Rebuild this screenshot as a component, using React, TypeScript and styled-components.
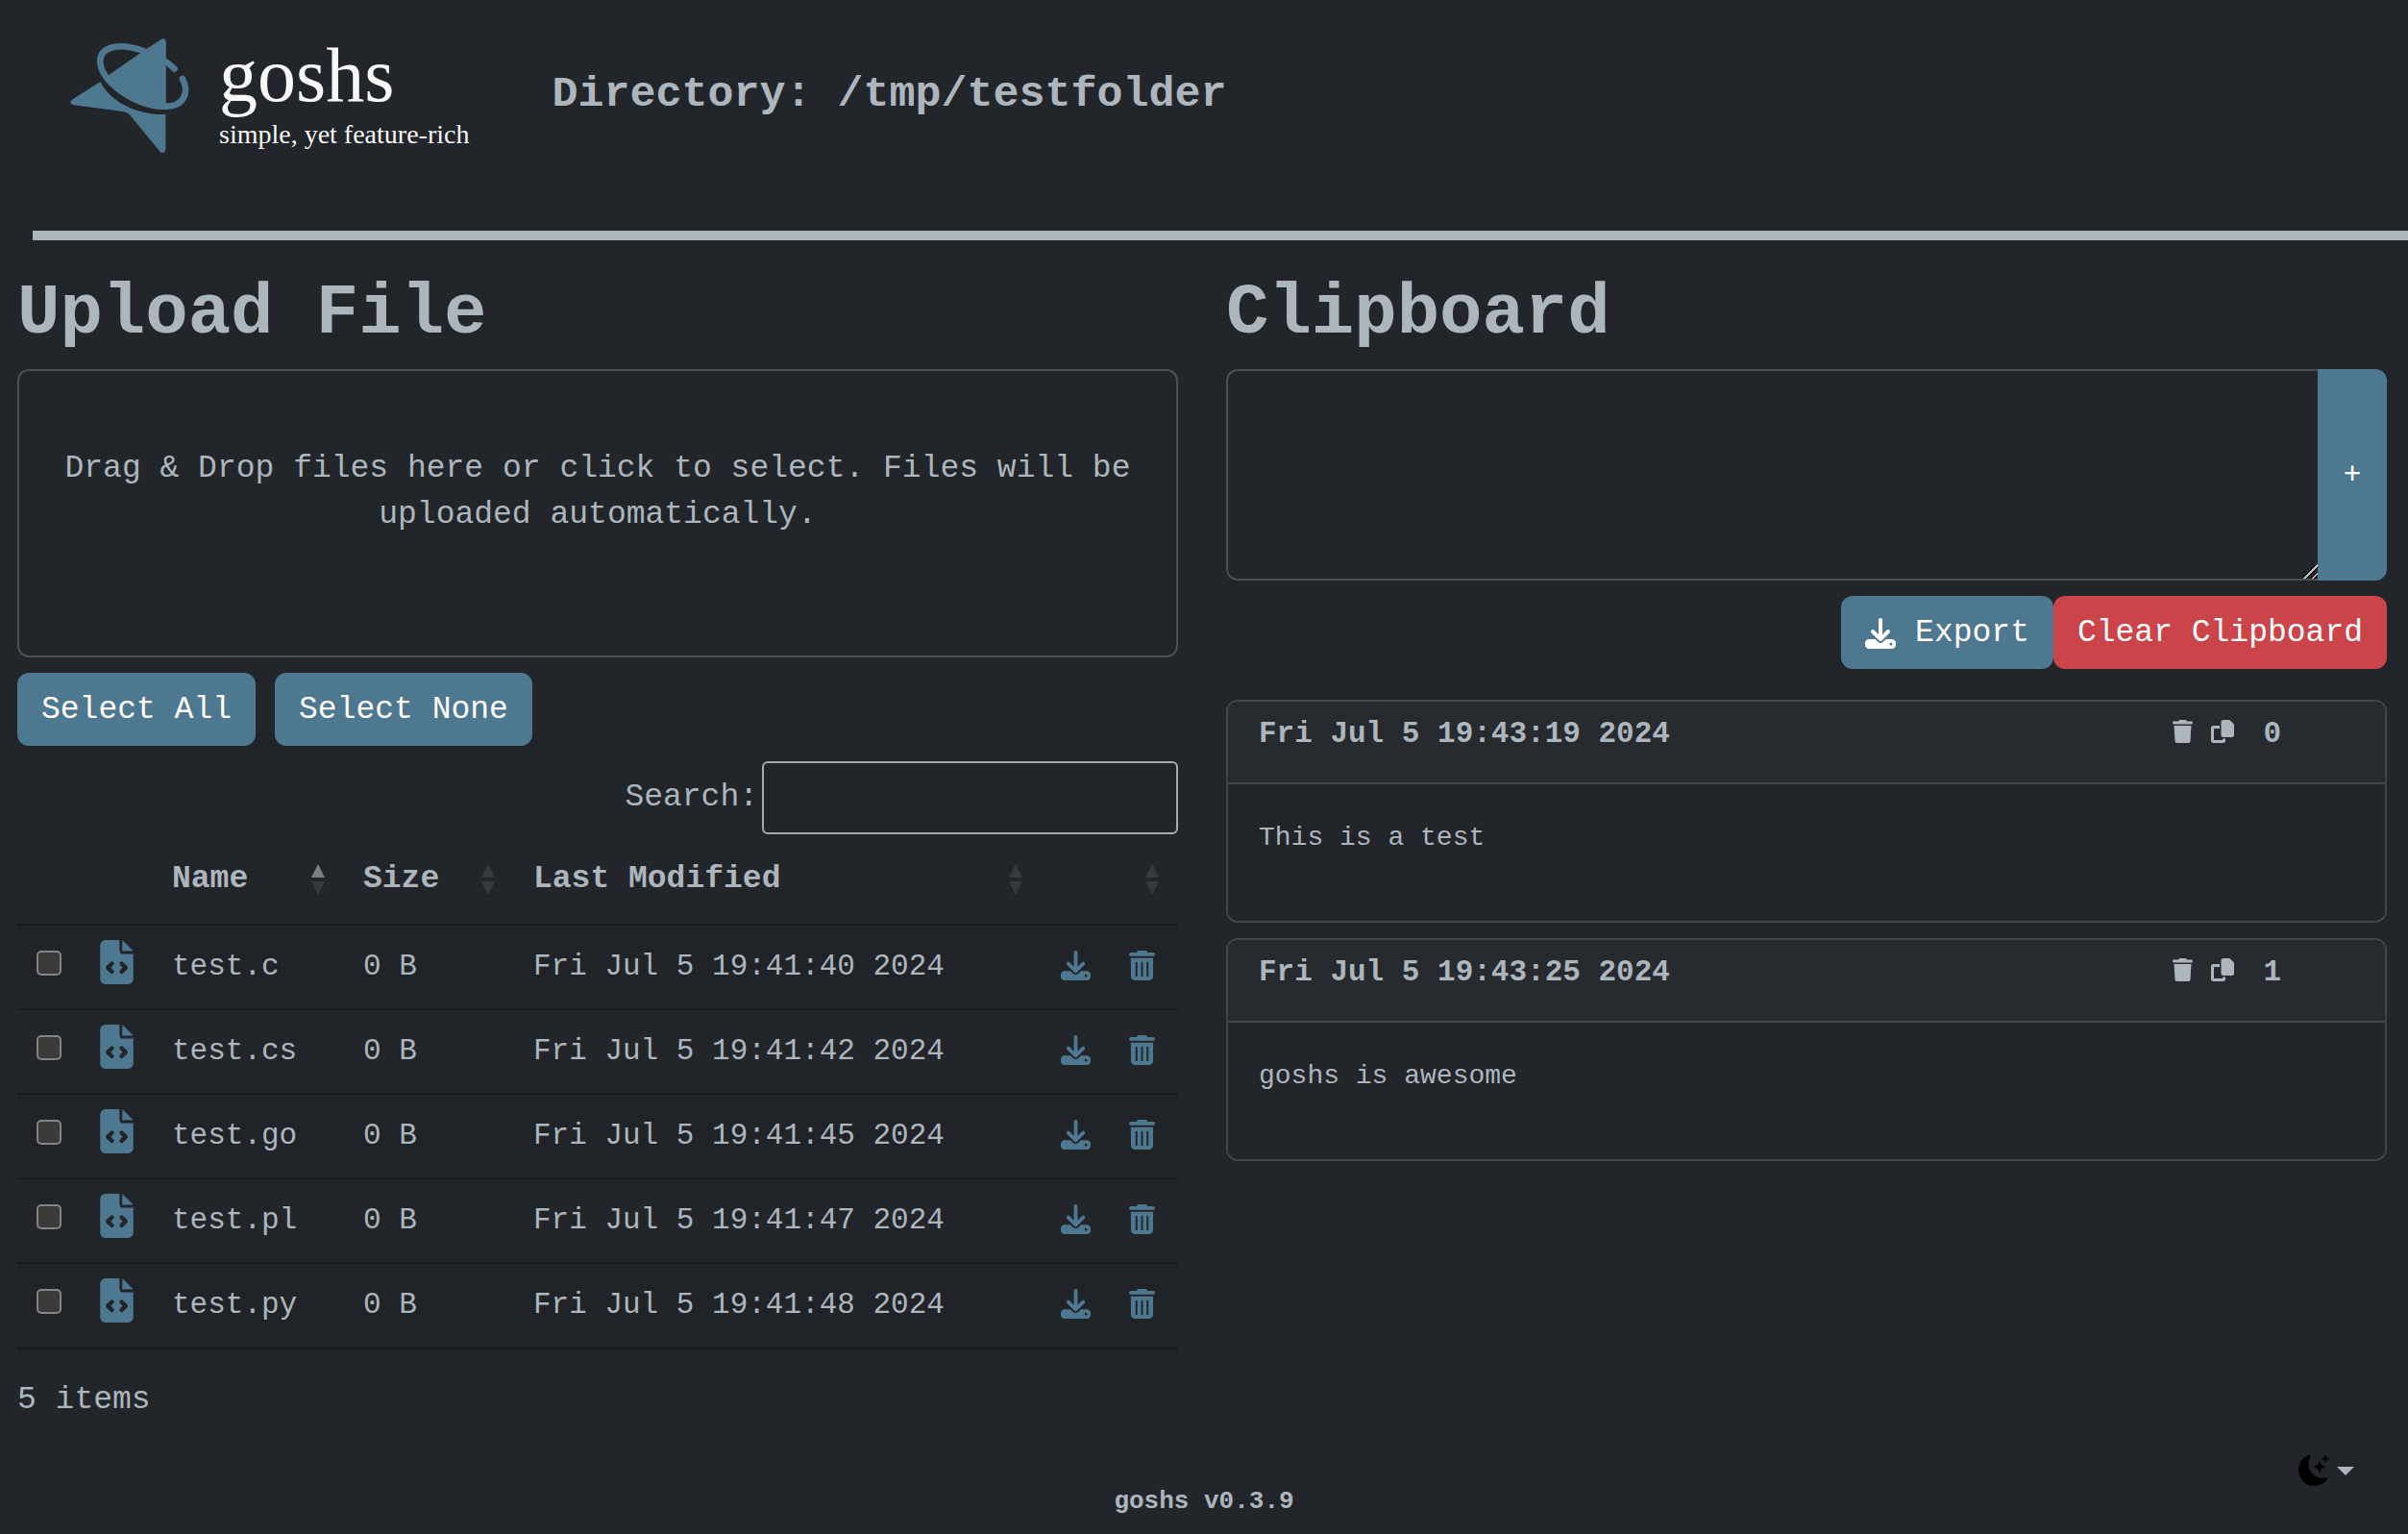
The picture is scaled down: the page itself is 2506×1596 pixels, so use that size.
import React, { useState } from "react";
import styled, { createGlobalStyle } from "styled-components";
import { FaDownload, FaFileCode, FaTrash, FaTrashCan } from "react-icons/fa6";
import { BsMoonStarsFill } from "react-icons/bs";

const color = {
  page: "#222529",
  stripe: "#202327",
  text: "#adb5bd",
  accent: "#4e7790",
  danger: "#cb444a",
  field: "#495057",
  cardLine: "#434649",
  cardHead: "#272a2f",
  rowLine: "#1a1c20",
};

const mono = '"Liberation Mono", "DejaVu Sans Mono", monospace';

const GlobalStyle = createGlobalStyle`
  *, *::before, *::after { box-sizing: border-box; }
  body {
    margin: 0;
    background: ${color.page};
    color: ${color.text};
    font-family: ${mono};
    font-size: 33px;
    line-height: 48px;
  }
  button, input, textarea { font-family: inherit; }
`;

const Header = styled.header`
  display: flex;
  align-items: flex-start;
  gap: 86px;
  min-height: 240px;
  padding: 36px 24px 0 72px;
`;

const Brand = styled.a`
  display: flex;
  align-items: flex-start;
  gap: 28px;
  color: #f8f8f8;
  text-decoration: none;
  font-family: "Liberation Serif", serif;
`;

const BrandName = styled.span`
  display: block;
  font-size: 80px;
  line-height: 84px;
`;

const BrandTagline = styled.span`
  display: block;
  margin-top: 4px;
  font-size: 28px;
  line-height: 32px;
  white-space: nowrap;
`;

const Directory = styled.h2`
  margin: 36px 0 0;
  font-size: 45px;
  line-height: 54px;
`;

const Rule = styled.hr`
  height: 10px;
  margin: 0 0 0 34px;
  border: 0;
  background: ${color.text};
`;

const Columns = styled.main`
  display: grid;
  grid-template-columns: minmax(0, 1fr) minmax(0, 1fr);
  gap: 50px;
  padding: 32px 22px 0 18px;
`;

const Title = styled.h1`
  margin: 0 0 14px;
  font-size: 74px;
  line-height: 88px;
`;

const DropZone = styled.label`
  display: block;
  min-height: 300px;
  padding: 78px 32px;
  border: 2px solid ${color.field};
  border-radius: 12px;
  text-align: center;
  cursor: pointer;

  input { display: none; }
`;

const ButtonRow = styled.div<{ $end?: boolean }>`
  display: flex;
  justify-content: ${(p) => (p.$end ? "flex-end" : "flex-start")};
  gap: ${(p) => (p.$end ? 0 : 20)}px;
  margin-top: 16px;
`;

const Button = styled.button<{ $danger?: boolean }>`
  display: flex;
  align-items: center;
  gap: 20px;
  height: 76px;
  padding: 2px 25px 0;
  border: 0;
  border-radius: 12px;
  background: ${(p) => (p.$danger ? color.danger : color.accent)};
  color: #fff;
  font-size: 33px;
  line-height: 48px;
  cursor: pointer;
`;

const SearchRow = styled.label`
  display: flex;
  align-items: center;
  justify-content: flex-end;
  gap: 4px;
  margin-top: 16px;
`;

const SearchInput = styled.input`
  width: 433px;
  height: 76px;
  padding: 0 10px;
  border: 2px solid #aaa;
  border-radius: 6px;
  background: transparent;
  color: inherit;
  font-size: 33px;
`;

const FileTable = styled.table`
  width: 100%;
  table-layout: fixed;
  border-collapse: separate;
  border-spacing: 0;
`;

const Col = styled.col<{ $width?: number }>`
  width: ${(p) => (p.$width ? `${p.$width}px` : "auto")};
`;

const HeadCell = styled.th`
  height: 95px;
  padding: 0 20px;
  border-bottom: 2px solid ${color.rowLine};
  text-align: left;
`;

const HeadContent = styled.div`
  display: flex;
  align-items: center;
  justify-content: space-between;
  min-height: 32px;
`;

const Row = styled.tr`
  &:nth-child(odd) { background: ${color.stripe}; }
  &:last-child td { height: 90px; border-bottom-width: 4px; }
`;

const Cell = styled.td<{ $lift?: number }>`
  height: 88px;
  padding: 0 20px ${(p) => p.$lift ?? 0}px;
  border-bottom: 2px solid ${color.rowLine};
  font-size: 31px;
  white-space: nowrap;
  vertical-align: middle;
`;

const FileIcon = styled(FaFileCode)`
  display: block;
  width: 35px;
  height: 46px;
  color: ${color.accent};
`;

const Checkbox = styled.input`
  display: block;
  appearance: none;
  width: 26px;
  height: 26px;
  margin: 0;
  border: 2px solid #858585;
  border-radius: 5px;
  background: #3b3b3b;

  &:checked { background: ${color.accent}; }
`;

const RowActions = styled.div`
  display: flex;
  align-items: center;
  gap: 40px;
`;

const DeleteIcon = styled(FaTrashCan)`
  width: 27px;
  height: 31px;
`;

const FileLink = styled.a`
  color: inherit;
  text-decoration: none;
`;

const IconButton = styled.button<{ $accent?: boolean }>`
  display: flex;
  padding: 0;
  border: 0;
  background: none;
  color: ${(p) => (p.$accent ? color.accent : color.text)};
  cursor: pointer;
`;

const ItemCount = styled.p`
  margin: 28px 0 0;
`;

const InputGroup = styled.div`
  display: flex;
  height: 220px;
`;

const ClipboardText = styled.textarea`
  flex: 1;
  min-width: 0;
  padding: 12px 24px;
  border: 2px solid ${color.field};
  border-right: 0;
  border-radius: 12px 0 0 12px;
  background: transparent;
  color: inherit;
  font-size: 33px;
  resize: vertical;

  &::-webkit-resizer {
    background: linear-gradient(
      135deg,
      transparent 46%,
      #000 46% 50%,
      #c4c4c4 50% 58%,
      #000 58% 62%,
      transparent 62% 74%,
      #000 74% 78%,
      #c4c4c4 78% 86%,
      #000 86% 90%,
      transparent 90%
    );
  }
`;

const AddButton = styled.button`
  width: 72px;
  padding: 0;
  border: 0;
  border-radius: 0 12px 12px 0;
  background: ${color.accent};
  color: #fff;
  font-size: 31px;
  cursor: pointer;
`;

const CardList = styled.section`
  display: flex;
  flex-direction: column;
  gap: 16px;
  margin-top: 32px;
`;

const Card = styled.article`
  overflow: hidden;
  border: 2px solid ${color.cardLine};
  border-radius: 12px;
`;

const CardHeader = styled.header`
  display: flex;
  align-items: flex-start;
  padding: 14px 108px 30px 32px;
  border-bottom: 2px solid ${color.cardLine};
  background: ${color.cardHead};
  font-size: 31px;
  line-height: 40px;
  font-weight: bold;
`;

const CardDate = styled.time`
  flex: 1;
`;

const CardActions = styled.div`
  display: flex;
  align-items: center;
  gap: 19px;
  height: 34px;
  margin-right: 30px;
`;

const ClearIcon = styled(FaTrash)`
  width: 21px;
  height: 24px;
`;

const CardBody = styled.pre`
  margin: 0;
  padding: 35px 32px 65px;
  font-family: inherit;
  font-size: 28px;
  line-height: 42px;
`;

const Footer = styled.footer`
  padding: 33px 56px 16px;
`;

const ThemeButton = styled.button`
  display: flex;
  align-items: center;
  gap: 8px;
  margin-left: auto;
  padding: 0;
  border: 0;
  background: none;
  color: #000;
  cursor: pointer;

  &::after {
    content: "";
    border: 9px solid transparent;
    border-top-color: ${color.text};
    border-bottom: 0;
  }
`;

const Version = styled.p`
  margin: 0;
  font-size: 26px;
  line-height: 32px;
  font-weight: bold;
  text-align: center;
`;

function Logo() {
  return (
    <svg width="128" height="124" viewBox="72 36 128 124" fill={color.accent} aria-hidden="true">
      <path d="M167.500 41.300 Q170 39 172 41.200 Q172.800 42 172.800 44 V114 C150 114.500 124 101 112.500 78.500 L153.600 50 Z" />
      <path d="M104.400 85 C114 105 142 120 172.400 119 V155 Q172 159 169 159 Q167 159 165.500 156.500 L135 119.500 Q132.500 116.500 128 116 L77 109.200 Q71 107.500 75 103.800 Z" />
      <path
        d="M190 82 C197 95 192.500 110.700 172 110.700 C141 110.700 104.200 85 104.200 64 C104.200 49 123 43 152 54 C163 58 174 64 181.500 71.500"
        fill="none"
        stroke={color.accent}
        strokeWidth="6.600"
        strokeLinecap="round"
      />
    </svg>
  );
}

function SortArrows({ ascending }: { ascending?: boolean }) {
  return (
    <svg width="14" height="32" viewBox="0 0 14 32" aria-hidden="true">
      <path d="M7 0 14 14H0Z" fill={ascending ? "#7b7f83" : "#36393d"} />
      <path d="M0 18H14L7 32Z" fill="#36393d" />
    </svg>
  );
}

function CopyIcon() {
  return (
    <svg width="24" height="24" viewBox="0 0 512 512" fill="currentColor" aria-hidden="true">
      <path d="M272 0H396.100c12.700 0 24.900 5.100 33.900 14.100l67.900 67.900c9 9 14.100 21.200 14.100 33.900V336c0 26.500-21.500 48-48 48H272c-26.500 0-48-21.500-48-48V48c0-26.500 21.500-48 48-48zM48 128H192v64H64V448H256V416h64v48c0 26.500-21.500 48-48 48H48c-26.500 0-48-21.500-48-48V176c0-26.500 21.500-48 48-48z" />
    </svg>
  );
}

const files = [
  { name: "test.c", size: "0 B", modified: "Fri Jul 5 19:41:40 2024" },
  { name: "test.cs", size: "0 B", modified: "Fri Jul 5 19:41:42 2024" },
  { name: "test.go", size: "0 B", modified: "Fri Jul 5 19:41:45 2024" },
  { name: "test.pl", size: "0 B", modified: "Fri Jul 5 19:41:47 2024" },
  { name: "test.py", size: "0 B", modified: "Fri Jul 5 19:41:48 2024" },
];

const clips = [
  { date: "Fri Jul 5 19:43:19 2024", text: "This is a test" },
  { date: "Fri Jul 5 19:43:25 2024", text: "goshs is awesome" },
];

function UploadPanel() {
  const [selected, setSelected] = useState<string[]>([]);
  const [query, setQuery] = useState("");
  const shown = files.filter((f) => f.name.includes(query));
  const toggle = (name: string) =>
    setSelected((s) => (s.includes(name) ? s.filter((n) => n !== name) : [...s, name]));

  return (
    <section>
      <Title>Upload File</Title>
      <DropZone>
        Drag &amp; Drop files here or click to select. Files will be uploaded automatically.
        <input type="file" multiple />
      </DropZone>
      <ButtonRow>
        <Button type="button" onClick={() => setSelected(files.map((f) => f.name))}>
          Select All
        </Button>
        <Button type="button" onClick={() => setSelected([])}>
          Select None
        </Button>
      </ButtonRow>
      <SearchRow>
        Search:
        <SearchInput type="search" value={query} onChange={(e) => setQuery(e.target.value)} />
      </SearchRow>
      <FileTable>
        <colgroup>
          <Col $width={66} />
          <Col $width={75} />
          <Col $width={199} />
          <Col $width={177} />
          <Col />
          <Col $width={142} />
        </colgroup>
        <thead>
          <tr>
            <HeadCell />
            <HeadCell />
            <HeadCell>
              <HeadContent>
                Name
                <SortArrows ascending />
              </HeadContent>
            </HeadCell>
            <HeadCell>
              <HeadContent>
                Size
                <SortArrows />
              </HeadContent>
            </HeadCell>
            <HeadCell>
              <HeadContent>
                Last Modified
                <SortArrows />
              </HeadContent>
            </HeadCell>
            <HeadCell>
              <HeadContent>
                <span />
                <SortArrows />
              </HeadContent>
            </HeadCell>
          </tr>
        </thead>
        <tbody>
          {shown.map((f) => (
            <Row key={f.name}>
              <Cell $lift={8}>
                <Checkbox
                  type="checkbox"
                  aria-label={`Select ${f.name}`}
                  checked={selected.includes(f.name)}
                  onChange={() => toggle(f.name)}
                />
              </Cell>
              <Cell $lift={10}>
                <FileIcon />
              </Cell>
              <Cell>
                <FileLink href={`#${f.name}`}>{f.name}</FileLink>
              </Cell>
              <Cell>{f.size}</Cell>
              <Cell>{f.modified}</Cell>
              <Cell $lift={4}>
                <RowActions>
                  <IconButton $accent type="button" aria-label={`Download ${f.name}`}>
                    <FaDownload size={31} />
                  </IconButton>
                  <IconButton $accent type="button" aria-label={`Delete ${f.name}`}>
                    <DeleteIcon />
                  </IconButton>
                </RowActions>
              </Cell>
            </Row>
          ))}
        </tbody>
      </FileTable>
      <ItemCount>{shown.length} items</ItemCount>
    </section>
  );
}

function ClipboardPanel() {
  return (
    <section>
      <Title>Clipboard</Title>
      <InputGroup>
        <ClipboardText aria-label="Clipboard entry" />
        <AddButton type="button" aria-label="Add entry">
          +
        </AddButton>
      </InputGroup>
      <ButtonRow $end>
        <Button type="button">
          <FaDownload size={32} />
          Export
        </Button>
        <Button type="button" $danger>
          Clear Clipboard
        </Button>
      </ButtonRow>
      <CardList>
        {clips.map((clip, index) => (
          <Card key={clip.date}>
            <CardHeader>
              <CardDate>{clip.date}</CardDate>
              <CardActions>
                <IconButton type="button" aria-label="Delete entry">
                  <ClearIcon />
                </IconButton>
                <IconButton type="button" aria-label="Copy entry">
                  <CopyIcon />
                </IconButton>
              </CardActions>
              {index}
            </CardHeader>
            <CardBody>{clip.text}</CardBody>
          </Card>
        ))}
      </CardList>
    </section>
  );
}

export default function App() {
  return (
    <>
      <GlobalStyle />
      <Header>
        <Brand href="#">
          <Logo />
          <div>
            <BrandName>goshs</BrandName>
            <BrandTagline>simple, yet feature-rich</BrandTagline>
          </div>
        </Brand>
        <Directory>Directory: /tmp/testfolder</Directory>
      </Header>
      <Rule />
      <Columns>
        <UploadPanel />
        <ClipboardPanel />
      </Columns>
      <Footer>
        <ThemeButton type="button" aria-label="Change theme">
          <BsMoonStarsFill size={32} />
        </ThemeButton>
        <Version>goshs v0.3.9</Version>
      </Footer>
    </>
  );
}
